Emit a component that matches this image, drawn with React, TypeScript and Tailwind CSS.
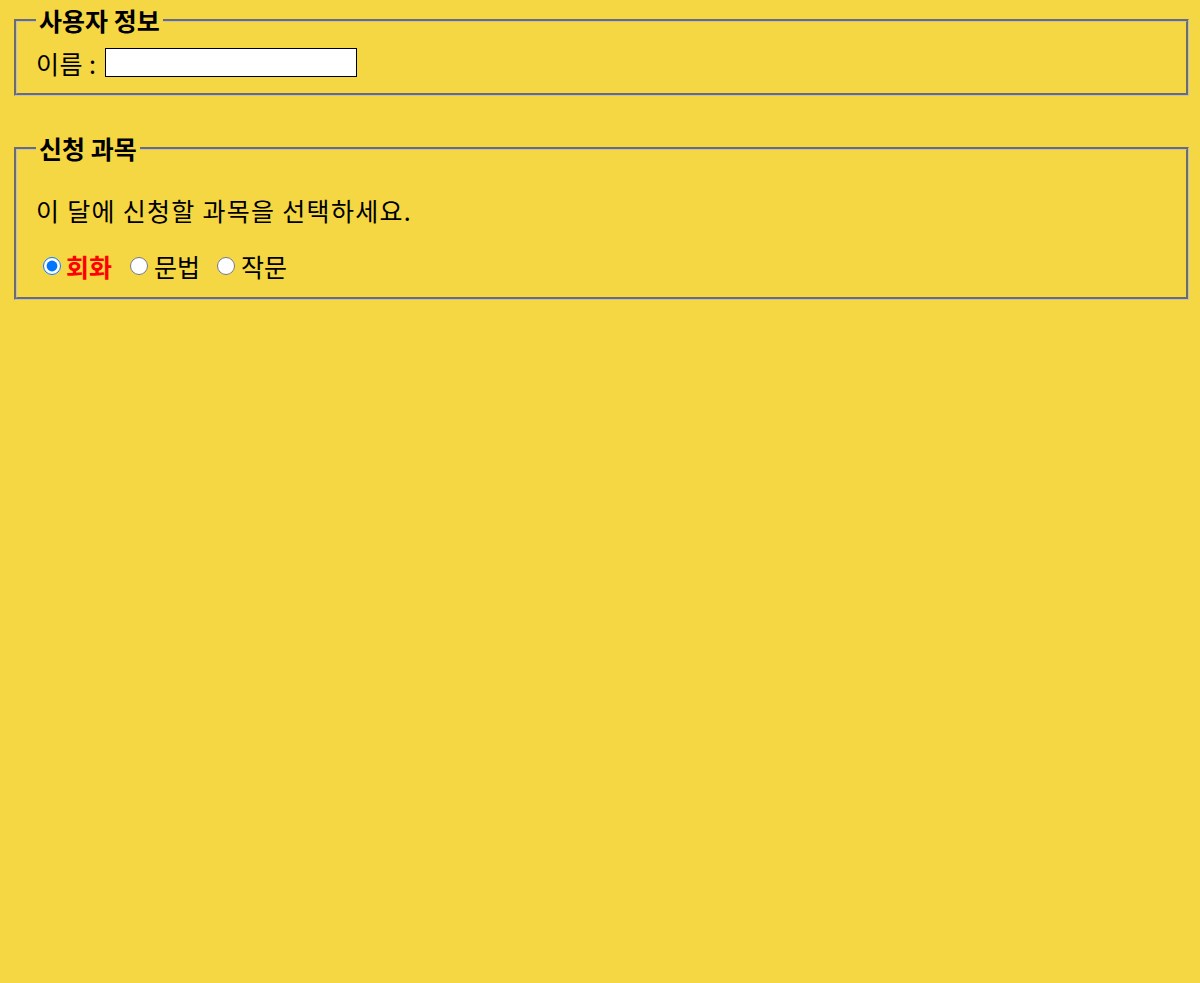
export default function App() {
  return (
    <div className="min-h-screen bg-[#f4d742] pl-[14px] pr-[11px] pt-[5px] font-['Noto_Sans_CJK_KR',sans-serif] text-[25px] text-black">
      <fieldset className="border-[3px] [border-style:groove] border-[#c0c0c0] px-[19px] pb-[15px]">
        <legend className="px-[3px] font-bold leading-[30px]">사용자 정보</legend>
        <label className="mt-[13px] flex items-end gap-[8px] leading-[30px]">
          <span className="tracking-[0.5px]">이름 :</span>
          <input type="text" className="w-[252px] h-[29px] border border-black bg-white mb-[1px]" />
        </label>
      </fieldset>

      <fieldset className="mt-[37px] border-[3px] [border-style:groove] border-[#c0c0c0] px-[19px] pb-[15px]">
        <legend className="px-[3px] font-bold leading-[30px]">신청 과목</legend>
        <p className="mt-[31px] leading-[32px] tracking-[1.3px]">이 달에 신청할 과목을 선택하세요.</p>
        <div className="mt-[24px] flex items-center leading-[32px]">
          <label className="flex items-center">
            <input type="radio" name="subject" defaultChecked className="ml-[7px] mr-[5px] w-[18px] h-[18px] accent-[#0075ff]" />
            <span className="font-bold text-[#ff0000]">회화</span>
          </label>
          <label className="flex items-center ml-[11px]">
            <input type="radio" name="subject" className="ml-[7px] mr-[6px] w-[18px] h-[18px]" />
            <span>문법</span>
          </label>
          <label className="flex items-center ml-[10px]">
            <input type="radio" name="subject" className="ml-[7px] mr-[6px] w-[18px] h-[18px]" />
            <span>작문</span>
          </label>
        </div>
      </fieldset>
    </div>
  );
}
